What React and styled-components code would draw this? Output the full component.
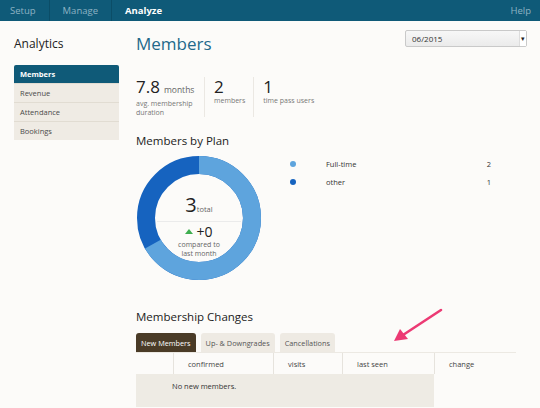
import React from 'react';
import styled, { createGlobalStyle } from 'styled-components';

const GlobalStyle = createGlobalStyle`
  html, body { margin: 0; padding: 0; }
  body {
    background: #fcfbf9;
    font-family: "Open Sans", "Noto Sans", sans-serif;
    color: #333;
  }
`;

const navItems = ['Setup', 'Manage', 'Analyze'];
const sideItems = ['Members', 'Revenue', 'Attendance', 'Bookings'];
const stats = [
  { value: '7.8', unit: 'months', label: 'avg. membership duration', narrow: true },
  { value: '2', label: 'members' },
  { value: '1', label: 'time pass users' },
];
const plans = [
  { name: 'Full-time', count: 2, color: '#5ea4dd' },
  { name: 'other', count: 1, color: '#1663bf' },
];
const tabs = ['New Members', 'Up- & Downgrades', 'Cancellations'];
const columns = [
  { title: '', width: 37 },
  { title: 'confirmed', width: 100 },
  { title: 'visits', width: 69 },
  { title: 'last seen', width: 92 },
  { title: 'change', width: 80 },
];

function Donut() {
  const r = 53;
  const c = 2 * Math.PI * r;
  const total = plans.reduce((s, p) => s + p.count, 0);
  const fullLen = (plans[0].count / total) * c;
  return (
    <DonutWrap>
      <svg width="126" height="126" viewBox="0 0 126 126">
        <circle cx="63" cy="63" r={r} fill="none" stroke="#1663bf" strokeWidth="18" />
        <circle
          cx="63"
          cy="63"
          r={r}
          fill="none"
          stroke="#5ea4dd"
          strokeWidth="18"
          strokeDasharray={`${fullLen} ${c}`}
          transform="rotate(-90 63 63)"
        />
      </svg>
      <CenterLabel>
        <TotalLine>
          3<small>total</small>
        </TotalLine>
        <Divider />
        <ChangeLine>
          <Triangle />+0
        </ChangeLine>
        <Caption>compared to<br />last month</Caption>
      </CenterLabel>
    </DonutWrap>
  );
}

export default function App() {
  return (
    <Page>
      <GlobalStyle />
      <TopBar>
        {navItems.map((n) => (
          <NavItem key={n} active={n === 'Analyze'}>{n}</NavItem>
        ))}
        <Help>Help</Help>
      </TopBar>
      <Layout>
        <Sidebar>
          <SideTitle>Analytics</SideTitle>
          <SideMenu>
            {sideItems.map((s) => (
              <SideItem key={s} active={s === 'Members'}>{s}</SideItem>
            ))}
          </SideMenu>
        </Sidebar>
        <Main>
          <HeaderRow>
            <Title>Members</Title>
            <Select>
              <span>06/2015</span>
              <SelectArrow>▾</SelectArrow>
            </Select>
          </HeaderRow>
          <Stats>
            {stats.map((s) => (
              <Stat key={s.label}>
                <StatValue>
                  {s.value}
                  {s.unit && <small>{s.unit}</small>}
                </StatValue>
                <StatLabel narrow={s.narrow}>{s.label}</StatLabel>
              </Stat>
            ))}
          </Stats>
          <SectionTitle>Members by Plan</SectionTitle>
          <ChartRow>
            <Donut />
            <Legend>
              {plans.map((p) => (
                <LegendRow key={p.name}>
                  <Dot color={p.color} />
                  <LegendName>{p.name}</LegendName>
                  <LegendCount>{p.count}</LegendCount>
                </LegendRow>
              ))}
            </Legend>
          </ChartRow>
          <SectionTitle spaced>Membership Changes</SectionTitle>
          <Tabs>
            {tabs.map((t, i) => (
              <Tab key={t} active={i === 0}>{t}</Tab>
            ))}
          </Tabs>
          <HeadRow>
            {columns.map((col, i) => (
              <HeadCell key={i} width={col.width} first={i === 0}>{col.title}</HeadCell>
            ))}
          </HeadRow>
          <EmptyRow>No new members.</EmptyRow>
        </Main>
      </Layout>
      <Arrow width="56" height="40" viewBox="0 0 56 40">
        <line x1="50" y1="4" x2="12" y2="29" stroke="#ec3a74" strokeWidth="2.6" strokeLinecap="round" />
        <polygon points="3,35 9,23 17,33" fill="#ec3a74" />
      </Arrow>
    </Page>
  );
}

const Page = styled.div`
  position: relative;
  width: 540px;
  height: 408px;
  overflow: hidden;
`;

const TopBar = styled.div`
  height: 21px;
  background: #0f5a78;
  display: flex;
  align-items: stretch;
`;

const NavItem = styled.div`
  display: flex;
  align-items: center;
  padding: 0 13px;
  font-size: 9.5px;
  color: ${({ active }) => (active ? '#ffffff' : '#8db2c3')};
  font-weight: ${({ active }) => (active ? 700 : 400)};
  border-right: ${({ active }) => (active ? 'none' : '1px solid #0b4d67')};
  &:first-child {
    padding-left: 10px;
  }
`;

const Help = styled.div`
  margin-left: auto;
  padding-right: 9px;
  display: flex;
  align-items: center;
  font-size: 9.5px;
  color: #8db2c3;
`;

const Layout = styled.div`
  display: flex;
  padding: 0 13px 0 14px;
`;

const Sidebar = styled.div`
  width: 105px;
  flex-shrink: 0;
  padding-top: 14px;
`;

const SideTitle = styled.div`
  font-size: 12px;
  line-height: 17px;
  color: #222;
`;

const SideMenu = styled.div`
  margin-top: 13px;
`;

const SideItem = styled.div`
  height: 18px;
  display: flex;
  align-items: center;
  padding-left: 6px;
  font-size: 7.5px;
  background: ${({ active }) => (active ? '#0f5a78' : '#efebe4')};
  color: ${({ active }) => (active ? '#ffffff' : '#4a4a4a')};
  font-weight: ${({ active }) => (active ? 700 : 400)};
  border-top: 1px solid ${({ active }) => (active ? '#0f5a78' : '#e1dcd2')};
  &:first-child {
    border-top: none;
    border-radius: 2px 2px 0 0;
  }
`;

const Main = styled.div`
  flex: 1;
  margin-left: 17px;
  padding-top: 9px;
`;

const HeaderRow = styled.div`
  display: flex;
  justify-content: space-between;
  align-items: flex-start;
`;

const Title = styled.h1`
  margin: 3px 0 0;
  font-size: 17px;
  line-height: 22px;
  font-weight: 400;
  color: #23698a;
`;

const Select = styled.div`
  width: 114px;
  height: 15px;
  border: 1px solid #c9c9c9;
  border-radius: 2px;
  background: linear-gradient(#f7f7f7, #ebebeb);
  display: flex;
  align-items: center;
  justify-content: space-between;
  padding-left: 6px;
  font-size: 8px;
  color: #333;
`;

const SelectArrow = styled.span`
  width: 6px;
  height: 100%;
  display: flex;
  align-items: center;
  justify-content: center;
  background: #fff;
  border-left: 1px solid #ddd;
  font-size: 7px;
  color: #222;
`;

const Stats = styled.div`
  display: flex;
  margin-top: 22px;
`;

const Stat = styled.div`
  padding: 0 8px 0 9px;
  border-left: 1px solid #ebe8e3;
  &:first-child {
    padding-left: 0;
    border-left: none;
  }
`;

const StatValue = styled.div`
  font-size: 17px;
  line-height: 19px;
  color: #222;
  small {
    font-size: 8.5px;
    color: #666;
    margin-left: 4px;
  }
`;

const StatLabel = styled.div`
  font-size: 7px;
  line-height: 9px;
  color: #777;
  max-width: ${({ narrow }) => (narrow ? '60px' : 'none')};
`;

const SectionTitle = styled.h2`
  margin: ${({ spaced }) => (spaced ? '28px' : '16px')} 0 0;
  font-size: 11.5px;
  line-height: 16px;
  font-weight: 400;
  color: #222;
`;

const ChartRow = styled.div`
  display: flex;
  align-items: flex-start;
  margin-top: 6px;
`;

const DonutWrap = styled.div`
  position: relative;
  width: 126px;
  height: 126px;
  flex-shrink: 0;
`;

const CenterLabel = styled.div`
  position: absolute;
  top: 39px;
  left: 21px;
  width: 84px;
  display: flex;
  flex-direction: column;
  align-items: center;
`;

const TotalLine = styled.div`
  font-size: 20px;
  line-height: 22px;
  color: #222;
  small {
    font-size: 7.5px;
    color: #666;
  }
`;

const Divider = styled.div`
  width: 100%;
  height: 1px;
  background: #ebebeb;
  margin-top: 1px;
`;

const ChangeLine = styled.div`
  display: flex;
  align-items: center;
  font-size: 14px;
  line-height: 17px;
  color: #222;
  margin-top: 1px;
`;

const Triangle = styled.span`
  width: 0;
  height: 0;
  border-left: 4px solid transparent;
  border-right: 4px solid transparent;
  border-bottom: 5px solid #3fae4f;
  margin-right: 3px;
`;

const Caption = styled.div`
  font-size: 7px;
  line-height: 9px;
  color: #666;
  text-align: center;
`;

const Legend = styled.div`
  margin-left: 28px;
  width: 205px;
`;

const LegendRow = styled.div`
  display: flex;
  align-items: center;
  height: 18px;
  font-size: 7.5px;
  color: #333;
`;

const Dot = styled.span`
  width: 6px;
  height: 6px;
  border-radius: 50%;
  background: ${({ color }) => color};
`;

const LegendName = styled.span`
  margin-left: 30px;
`;

const LegendCount = styled.span`
  margin-left: auto;
  padding-right: 4px;
`;

const Tabs = styled.div`
  display: flex;
  gap: 5px;
  margin-top: 8px;
  border-bottom: 1px solid #ece9e3;
  width: 380px;
`;

const Tab = styled.div`
  height: 19px;
  display: flex;
  align-items: center;
  padding: 0 5px;
  border-radius: 3px 3px 0 0;
  font-size: 7.3px;
  background: ${({ active }) => (active ? '#4a3b27' : '#eeeae3')};
  color: ${({ active }) => (active ? '#ffffff' : '#555')};
`;

const HeadRow = styled.div`
  display: flex;
  height: 21px;
`;

const HeadCell = styled.div`
  width: ${({ width }) => width}px;
  box-sizing: border-box;
  display: flex;
  align-items: center;
  padding-left: 14px;
  font-size: 7.5px;
  color: #444;
  border-left: ${({ first }) => (first ? 'none' : '1px solid #e6e3dd')};
`;

const EmptyRow = styled.div`
  width: 298px;
  height: 33px;
  box-sizing: border-box;
  background: #eeebe4;
  padding: 7px 0 0 36px;
  font-size: 7.5px;
  color: #333;
`;

const Arrow = styled.svg`
  position: absolute;
  left: 391px;
  top: 306px;
`;
